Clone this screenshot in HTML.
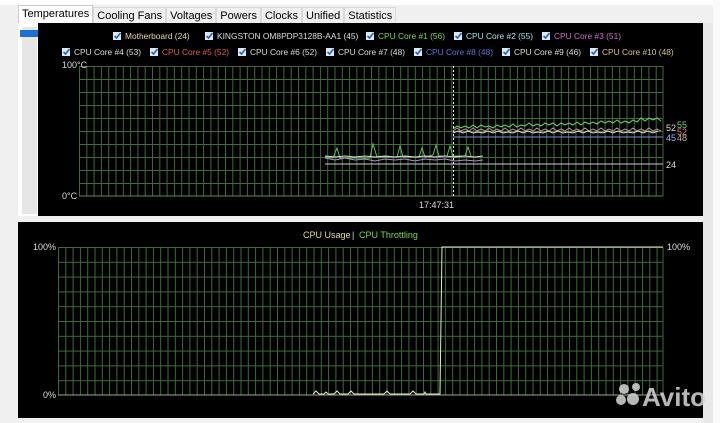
<!DOCTYPE html>
<html><head><meta charset="utf-8"><style>
body{margin:0;width:720px;height:423px;background:#f0f0f0;overflow:hidden;font-family:"Liberation Sans",sans-serif;position:relative}
.tabs{position:absolute;left:18px;top:5px;height:18px;font-size:11px;display:flex}
.tab{padding:2px 3px 0 3px;border:1px solid #d9d9d9;border-bottom:none;background:#f0f0f0;color:#000;height:16px;box-sizing:border-box;margin-top:2px}
.tab.a{background:#fff;margin-top:0;height:19px;border-color:#ccc}
svg{position:absolute;left:0;top:0}
</style></head><body>
<div style="position:absolute;left:0;top:0;width:720px;height:5px;background:#fff"></div>
<div class="tabs"><div class="tab a">Temperatures</div><div class="tab">Cooling Fans</div><div class="tab">Voltages</div><div class="tab">Powers</div><div class="tab">Clocks</div><div class="tab">Unified</div><div class="tab">Statistics</div></div>
<div style="position:absolute;left:18px;top:23px;width:20px;height:193px;background:#fff"></div>
<div style="position:absolute;left:22px;top:27px;width:15px;height:187px;background:#e6e6e6"></div>
<div style="position:absolute;left:20px;top:30px;width:18px;height:7px;background:#1a73d4"></div>
<div style="position:absolute;left:703px;top:23px;width:10px;height:400px;background:#e8e8e8"></div>
<div style="position:absolute;left:713px;top:0;width:7px;height:423px;background:#fafafa"></div>
<svg width="720" height="423" font-family="Liberation Sans, sans-serif">
<defs>
<pattern id="g1" x="79" y="66" width="7.3" height="13" patternUnits="userSpaceOnUse"><path d="M0.5 0V13M0 0.5H7.3" stroke="#3f6a3a" stroke-width="1" fill="none"/></pattern>
<pattern id="g2" x="58" y="247" width="7.3" height="14.8" patternUnits="userSpaceOnUse"><path d="M0.5 0V14.8M0 0.5H7.3" stroke="#3f6a3a" stroke-width="1" fill="none"/></pattern>
</defs>
<rect x="38" y="23" width="665" height="193" fill="#000"/>
<rect x="18" y="222" width="685" height="196" fill="#000"/>
<rect x="79" y="66" width="584" height="130" fill="url(#g1)"/>
<line x1="79" y1="196" x2="663" y2="196" stroke="#5d8a55"/>
<line x1="663" y1="66" x2="663" y2="196" stroke="#3f6a3a"/>
<rect x="58" y="247" width="605" height="148" fill="url(#g2)"/>
<line x1="58" y1="395" x2="663" y2="395" stroke="#9aaa90"/>
<line x1="663" y1="247" x2="663" y2="395" stroke="#3f6a3a"/>
<g font-size="9">
<text x="62" y="68" fill="#ddd">100°C</text><text x="62" y="199" fill="#ddd">0°C</text>
<text x="419" y="208" fill="#ddd">17:47:31</text>
<text x="33" y="250" fill="#ddd">100%</text><text x="43" y="398" fill="#ddd">0%</text>
<text x="667" y="250" fill="#ddd">100%</text>
<text x="303" y="238" fill="#e8d8a0">CPU Usage</text><text x="352" y="238" fill="#ddd">|</text><text x="359" y="238" fill="#7cd84a">CPU Throttling</text>
<text x="666" y="131" fill="#ddd">52</text><text x="677" y="128" fill="#6ad86a">55</text><text x="677" y="135" fill="#e08080">52</text>
<text x="666" y="141" fill="#a0b0ff">45</text><text x="677" y="141" fill="#d0b080">48</text>
<text x="666" y="168" fill="#ddd">24</text>
</g>
<g font-size="8.4">
<rect x="113" y="32" width="8" height="8" fill="#dde8ff"/><path d="M114.5 36l2 2 4-5" stroke="#1a5fb4" stroke-width="1.5" fill="none"/><text x="125" y="39" fill="#e8d8a0">Motherboard (24)</text>
<rect x="205" y="32" width="8" height="8" fill="#dde8ff"/><path d="M206.5 36l2 2 4-5" stroke="#1a5fb4" stroke-width="1.5" fill="none"/><text x="217" y="39" fill="#ddd">KINGSTON OM8PDP3128B-AA1 (45)</text>
<rect x="366" y="32" width="8" height="8" fill="#dde8ff"/><path d="M367.5 36l2 2 4-5" stroke="#1a5fb4" stroke-width="1.5" fill="none"/><text x="378" y="39" fill="#7cd84a">CPU Core #1 (56)</text>
<rect x="454" y="32" width="8" height="8" fill="#dde8ff"/><path d="M455.5 36l2 2 4-5" stroke="#1a5fb4" stroke-width="1.5" fill="none"/><text x="466" y="39" fill="#a8e0f0">CPU Core #2 (55)</text>
<rect x="542" y="32" width="8" height="8" fill="#dde8ff"/><path d="M543.5 36l2 2 4-5" stroke="#1a5fb4" stroke-width="1.5" fill="none"/><text x="554" y="39" fill="#d070d0">CPU Core #3 (51)</text>
<rect x="62" y="48" width="8" height="8" fill="#dde8ff"/><path d="M63.5 52l2 2 4-5" stroke="#1a5fb4" stroke-width="1.5" fill="none"/><text x="74" y="55" fill="#ddd">CPU Core #4 (53)</text>
<rect x="150" y="48" width="8" height="8" fill="#dde8ff"/><path d="M151.5 52l2 2 4-5" stroke="#1a5fb4" stroke-width="1.5" fill="none"/><text x="162" y="55" fill="#e05a5a">CPU Core #5 (52)</text>
<rect x="238" y="48" width="8" height="8" fill="#dde8ff"/><path d="M239.5 52l2 2 4-5" stroke="#1a5fb4" stroke-width="1.5" fill="none"/><text x="250" y="55" fill="#ddd">CPU Core #6 (52)</text>
<rect x="326" y="48" width="8" height="8" fill="#dde8ff"/><path d="M327.5 52l2 2 4-5" stroke="#1a5fb4" stroke-width="1.5" fill="none"/><text x="338" y="55" fill="#ddd">CPU Core #7 (48)</text>
<rect x="414" y="48" width="8" height="8" fill="#dde8ff"/><path d="M415.5 52l2 2 4-5" stroke="#1a5fb4" stroke-width="1.5" fill="none"/><text x="426" y="55" fill="#6070e0">CPU Core #8 (48)</text>
<rect x="502" y="48" width="8" height="8" fill="#dde8ff"/><path d="M503.5 52l2 2 4-5" stroke="#1a5fb4" stroke-width="1.5" fill="none"/><text x="514" y="55" fill="#ddd">CPU Core #9 (46)</text>
<rect x="590" y="48" width="8" height="8" fill="#dde8ff"/><path d="M591.5 52l2 2 4-5" stroke="#1a5fb4" stroke-width="1.5" fill="none"/><text x="602" y="55" fill="#d8c090">CPU Core #10 (48)</text>
</g>
<line x1="453.5" y1="66" x2="453.5" y2="196" stroke="#fff" stroke-dasharray="2,2"/>
<line x1="325" y1="164" x2="663" y2="164" stroke="#ccc"/>
<path d="M325 157l8 1 4-10 3 10 30 0 3-14 4 13 20 0 3-11 3 11 16 0 3-9 3 9 8-2 3-10 3 11 8 0 3-10 3 10 12 0 3-9 3 9" stroke="#5fbf4f" fill="none"/>
<path d="M325 158l10 2 10-2 10 2 10-1 10 2 10-2 10 1 10-1 10 2 10-2 10 1 10-1 10 2 10-1 10 1 8-1" stroke="#b090d0" fill="none"/>
<path d="M325 156l10 1 10-1 10 1 10-1 10 1 10-1 10 1 10-1 10 1 10-1 10 1 10-1 10 1 10-1 10 1 8-1" stroke="#ddd" fill="none"/>
<path d="M453 137H663" stroke="#8090e0"/>
<path d="M453 131l4-3 4 3 4-2 4 2 4-3 4 3 4-2 4 2 4-3 4 3 4-2 4 2 4-3 4 3 4-2 4 2 4-3 4 3 4-2 4 2 4-3 4 3 4-2 4 2 4-3 4 3 4-2 4 2 4-3 4 3 4-2 4 2 4-3 4 3 4-2 4 2 4-3 4 3 4-2 4 2 4-3 4 3 4-2 4 2 4-3 4 3 4-2 4 2 4-3 4 3 4-2 4 2" stroke="#c09090" fill="none"/>
<path d="M453 129l4-3 4 2 4-2 4 2 4-3 4 3 4-3 4 2 4-1 4 2 4-3 4 2 4-2 4 2 4-3 4 3 4-2 4 1 4-3 4 3 4-2 4 2 4-3 4 2 4-2 4 3 4-3 4 2 4-2 4 2 4-3 4 3 4-3 4 2 4-2 4 2 4-3 4 2 4-2 4 2 4-3 4 3 4-2 4 2 4-3 4 2 4-4 4 3 4-3 4 2 4-2 4 3" stroke="#6ad86a" fill="none"/>
<path d="M453 133l5-2 5 2 5-2 5 2 5-1 5 1 5-2 5 2 5-2 5 2 5-1 5 1 5-2 5 2 5-2 5 2 5-1 5 1 5-2 5 2 5-2 5 2 5-1 5 1 5-2 5 2 5-2 5 2 5-1 5 1 5-2 5 2 5-2 5 2 5-1 5 1 5-2 5 2 5-2 5 2 5-2" stroke="#ddd" fill="none"/>
<path d="M313 394l3-3 3 3h5l2-2 2 2h6l3-3 3 3 8 0 3-3 3 3 30 0 3-3 3 3 20 0 3-3 3 3 8 0 1-2 1 2H440L442 247H663" stroke="#e8e8c8" fill="none"/>
<g fill="#d8d8d8" opacity="0.85"><circle cx="624" cy="389" r="5"/><circle cx="636" cy="387" r="4"/><circle cx="621" cy="400" r="5"/><circle cx="633" cy="399" r="6"/>
<text x="642" y="406" font-size="26" font-weight="bold">Avito</text></g>
</svg>
</body></html>
